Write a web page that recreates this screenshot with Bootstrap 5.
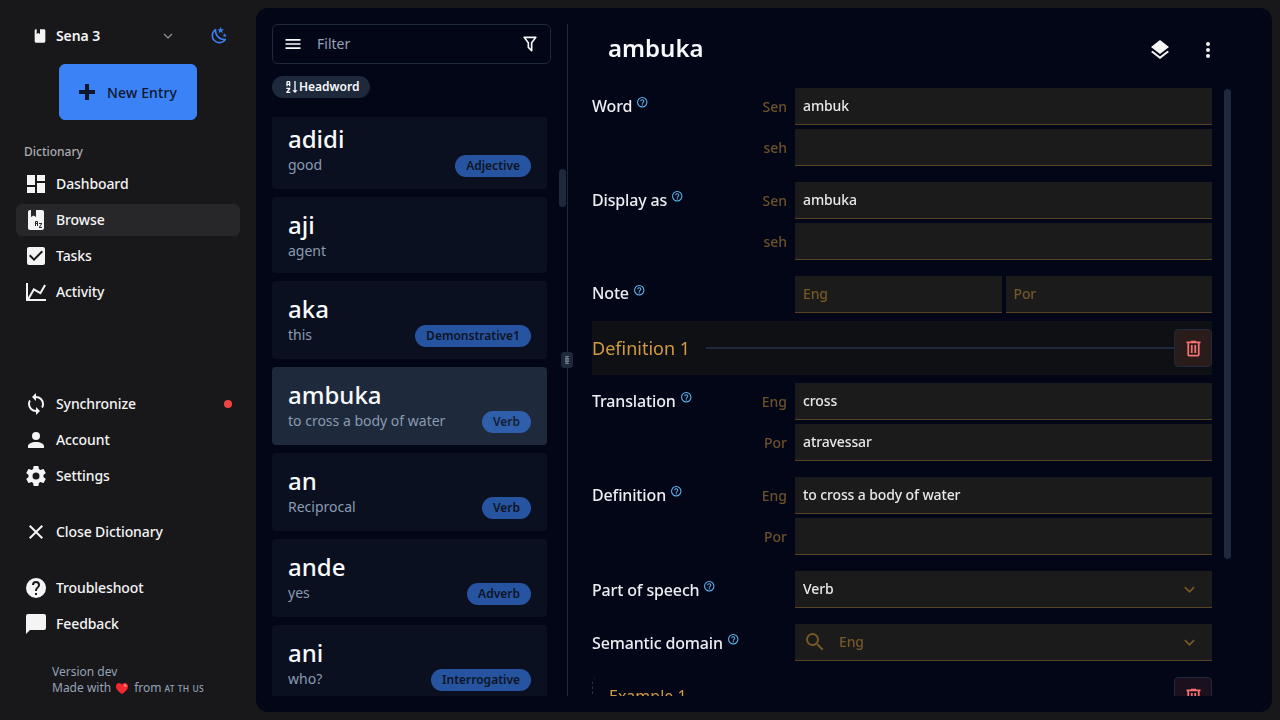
<!DOCTYPE html>
<html lang="en" data-bs-theme="dark">
<head>
<meta charset="utf-8">
<meta name="viewport" content="width=device-width, initial-scale=1">
<title>Sena 3 – Browse</title>
<link href="https://cdn.jsdelivr.net/npm/bootstrap@5.3.0/dist/css/bootstrap.min.css" rel="stylesheet">
<style>
  body { font-family: "Noto Sans", sans-serif; font-size: 14px; line-height: 20px; background: #18181b; color: #f4f4f5; }
  svg { fill: currentColor; flex: none; display: block; }
  .side { width: 256px; padding: 20px 16px 16px; }
  .side-head { height: 32px; padding-left: 16px; }
  .side-head .title { width: 104px; font-weight: 600; letter-spacing: -.1px; }
  .side-head .caret { color: #8b8b90; }
  .moon { color: #3b82f6; margin-left: 34px; margin-top: -1px; }
  .btn-entry { --bs-btn-color: #0f172a; --bs-btn-bg: #3b82f6; --bs-btn-border-color: #3b82f6; width: 138px; height: 56px; border-radius: 6px; font-size: 14px; font-weight: 500; gap: 8px; padding: 0 0 0 15px; margin: 12px 0 16px 43px; }
  .btn-entry span { letter-spacing: .15px; }
  .side-label { height: 32px; padding: 6px 8px; font-size: 12px; color: #acacb0; font-weight: 500; }
  .side .nav-link { height: 32px; padding: 0 8px; gap: 8px; color: #f4f4f5; border-radius: 6px; font-weight: 500; letter-spacing: -.1px; }
  .side .nav-link.active { background: #27272a; }
  .side .nav { gap: 4px; }
  .side .nav .apart { margin-top: 20px; }
  .status-dot { width: 8px; height: 8px; background: #ef4444; border-radius: 50%; }
  .about { font-size: 12px; line-height: 16px; color: #94a3b8; padding: 24px 0 0 36px; }
  .about .made { height: 16px; }
  .about small { font-size: 8.5px; word-spacing: .8px; letter-spacing: .2px; font-weight: 500; margin-left: 3px; margin-top: 1px; }
  .heart { margin: 1px 6px 0 5px; }
  .panel { background: #020617; border-radius: 12px; margin: 8px 8px 8px 0; padding: 16px 0 16px 16px; width: 1016px; }
  .list-pane { width: 295px; }
  .filter { width: 279px; height: 40px; border: 1px solid #1e293b; border-radius: 6px; padding: 0 10px; color: #f8fafc; }
  .filter input { background: none; border: 0; outline: 0; padding: 0 0 2px 14px; color: #f8fafc; min-width: 0; height: 38px; }
  .filter input::placeholder { color: #94a3b8; opacity: 1; }
  .sort-chip { width: 98px; height: 22px; margin: 12px 0 19px; border-radius: 11px; background: #1e293b; color: #f8fafc; font-size: 12px; font-weight: 600; line-height: 16px; padding-left: 11px; }
  .entries { width: 275px; }
  .entry-stack { gap: 8px; margin-top: -6px; }
  .entry { background: #0a101f; border-radius: 4px; padding: 12px 16px; flex: none; }
  .entry.chosen { background: #1e293b; }
  .entry h2 { font-size: 24px; line-height: 32px; font-weight: 500; color: #f8fafc; margin: 0; }
  .entry p { margin: 0; color: #8a9bb2; }
  .pos { height: 22px; border-radius: 11px; padding: 0 11px; line-height: 22px; font-size: 12px; font-weight: 600; background: #3b82f6; color: #0f172a; opacity: .6; }
  .thumb { width: 7px; border-radius: 4px; background: #1e293b; }
  .list-thumb { height: 38px; margin: 52px 1px 0 12px; }
  .form-thumb { height: 470px; margin-top: 1px; }
  .divider { width: 1px; background: #1e293b; }
  .grip { position: absolute; left: -6px; top: 328px; width: 12px; height: 16px; border-radius: 3px; background: #1e293b; color: #b6bdc8; }
  .editor { width: 639px; margin-left: 24px; will-change: transform; }
  .editor-head { height: 64px; padding-left: 16px; padding-right: 11px; }
  .editor-head h1 { font-size: 24px; line-height: 32px; font-weight: 600; margin: 0 0 16px; color: #f8fafc; }
  .tools { gap: 24px; margin-bottom: 13px; }
  .fields { width: 620px; }
  .field-grid { display: grid; grid-template-columns: 155px 40px 8px 417px; row-gap: 4px; margin-bottom: 16px; }
  .langs { grid-column: 2; text-align: right; color: #6d5229; height: 37px; line-height: 38px; font-weight: 500; }
  .field-grid > .ctl, .field-grid > .pair { grid-column: 4; }
  .cap { font-size: 16px; line-height: 36px; height: 37px; font-weight: 500; letter-spacing: -.15px; white-space: nowrap; color: #eceef1; }
  .cap svg { display: inline-block; vertical-align: 4px; color: #60b8f5; margin-left: 0; }
  .cap.low { line-height: 38px; }
  .cap.high { line-height: 35px; }
  .cap.high svg { vertical-align: 3px; }
  .ctl { height: 37px; background: #1b1b1b; border: 0; border-bottom: 1px solid #57431f; border-radius: 0; color: #e8e8e8; padding: 0 8px; font-weight: 500; letter-spacing: -.12px; font-size: 14px; width: 100%; min-width: 0; outline: 0; }
  input.ctl { padding-bottom: 2px; }
  .ctl::placeholder, .ctl.muted { color: #755826; opacity: 1; }
  .ctl svg { color: #755826; }
  .ctl .hint { margin-left: 12px; }
  .sense { height: 54px; background: #0f1013; margin: -8px 0 8px; color: #d29a42; font-size: 18px; }
  .sense hr { height: 2px; background: #1e293b; border: 0; opacity: 1; margin: 0 0 0 16px; }
  .btn-del { --bs-btn-color: #f87171; --bs-btn-bg: #2b1c1c; --bs-btn-border-color: #1e293b; width: 38px; height: 38px; padding: 0; border-radius: 4px; --bs-btn-hover-bg: #3b1c1c; }
  .example { height: 60px; border-left: 1px dashed #263246; border-radius: 6px 0 0 0; padding-left: 16px; color: #d29a42; font-size: 16px; }
  .example .btn-del { --bs-btn-bg: #1b101d; }
  .example span { line-height: 38px; }
</style>
</head>
<body class="vh-100 overflow-hidden">
<svg class="d-none">
  <symbol id="help" viewBox="0 0 24 24"><path d="M11,18H13V16H11V18M12,2A10,10 0 0,0 2,12A10,10 0 0,0 12,22A10,10 0 0,0 22,12A10,10 0 0,0 12,2M12,20C7.59,20 4,16.41 4,12C4,7.59 7.59,4 12,4C16.41,4 20,7.59 20,12C20,16.41 16.41,20 12,20M12,6A4,4 0 0,0 8,10H10A2,2 0 0,1 12,8A2,2 0 0,1 14,10C14,12 11,11.75 11,15H13C13,12.75 16,12.5 16,10A4,4 0 0,0 12,6Z"/></symbol>
  <symbol id="trash" viewBox="0 0 24 24"><path d="M9,3V4H4V6H5V19A2,2 0 0,0 7,21H17A2,2 0 0,0 19,19V6H20V4H15V3H9M7,6H17V19H7V6M9,8V17H11V8H9M13,8V17H15V8H13Z"/></symbol>
  <symbol id="down" viewBox="0 0 24 24"><path d="M7.41,8.58L12,13.17L16.59,8.58L18,10L12,16L6,10L7.41,8.58Z"/></symbol>
</svg>
<div class="d-flex h-100">
  <aside class="side d-flex flex-column">
    <div class="side-head d-flex align-items-center">
      <svg width="16" height="16" viewBox="0 0 24 24"><path d="M18,22A2,2 0 0,0 20,20V4C20,2.89 19.1,2 18,2H12V9L9.5,7.5L7,9V2H6A2,2 0 0,0 4,4V20A2,2 0 0,0 6,22H18Z"/></svg>
      <span class="title ms-2">Sena 3</span>
      <svg class="caret" width="16" height="16" viewBox="0 0 24 24"><path d="M6.500 9.500l5.500 5.500 5.500-5.500" fill="none" stroke="currentColor" stroke-width="2" stroke-linecap="round" stroke-linejoin="round"/></svg>
      <svg class="moon" width="19" height="19" viewBox="0 0 24 24"><path d="M17.75,4.09L15.22,6.03L16.13,9.09L13.5,7.28L10.87,9.09L11.78,6.03L9.25,4.09L12.44,4L13.5,1L14.56,4L17.75,4.09M21.25,11L19.61,12.25L20.2,14.23L18.5,13.06L16.8,14.23L17.39,12.25L15.75,11L17.81,10.95L18.5,9L19.19,10.95L21.25,11M18.97,15.95C19.8,15.87 20.69,17.05 20.16,17.8C19.84,18.25 19.5,18.67 19.08,19.07C15.17,23 8.84,23 4.94,19.07C1.03,15.17 1.03,8.83 4.94,4.93C5.34,4.53 5.76,4.17 6.21,3.85C6.96,3.32 8.14,4.21 8.06,5.04C7.79,7.9 8.75,10.87 10.95,13.06C13.14,15.26 16.1,16.22 18.97,15.95M17.33,17.97C14.5,17.81 11.7,16.64 9.53,14.5C7.36,12.31 6.2,9.5 6.04,6.68C3.23,9.82 3.34,14.64 6.35,17.66C9.37,20.67 14.19,20.78 17.33,17.97Z"/></svg>
    </div>
    <button class="btn btn-entry d-flex align-items-center flex-shrink-0"><svg width="24" height="24" viewBox="0 0 24 24"><path d="M20 14H14V20H10V14H4V10H10V4H14V10H20V14Z"/></svg><span class="pb-px">New Entry</span></button>
    <div class="side-label">Dictionary</div>
    <nav class="nav flex-column">
      <a class="nav-link d-flex align-items-center" href="#"><svg width="24" height="24" viewBox="0 0 24 24"><path d="M13,3V9H21V3M13,21H21V11H13M3,21H11V15H3M3,13H11V3H3V13Z"/></svg>Dashboard</a>
      <a class="nav-link active d-flex align-items-center" href="#"><svg width="24" height="24" viewBox="0 0 24 24"><path d="M5.81,2C4.83,2.09 4,3 4,4V20C4,21.05 4.95,22 6,22H18C19.05,22 20,21.05 20,20V4C20,2.89 19.1,2 18,2H12V9L9.5,7.5L7,9V2H6C5.94,2 5.87,2 5.81,2M12,13H13A1,1 0 0,1 14,14V18H13V16H12V18H11V14A1,1 0 0,1 12,13M12,14V15H13V14H12M15,15H18V16L16,19H18V20H15V19L17,16H15V15Z"/></svg>Browse</a>
      <a class="nav-link d-flex align-items-center" href="#"><svg width="24" height="24" viewBox="0 0 24 24"><path d="M10,17L5,12L6.41,10.58L10,14.17L17.59,6.58L19,8M19,3H5C3.89,3 3,3.89 3,5V19A2,2 0 0,0 5,21H19A2,2 0 0,0 21,19V5C21,3.89 20.1,3 19,3Z"/></svg>Tasks</a>
      <a class="nav-link d-flex align-items-center" href="#"><svg width="24" height="24" viewBox="0 0 24 24"><path d="M16,11.78L20.24,4.45L21.97,5.45L16.74,14.5L10.23,10.75L5.46,19H22V21H2V3H4V17.54L9.5,8L16,11.78Z"/></svg>Activity</a>
    </nav>
    <nav class="nav flex-column mt-auto">
      <a class="nav-link d-flex align-items-center" href="#"><svg width="24" height="24" viewBox="0 0 24 24"><path d="M12,18A6,6 0 0,1 6,12C6,11 6.25,10.03 6.7,9.2L5.24,7.74C4.46,8.97 4,10.43 4,12A8,8 0 0,0 12,20V23L16,19L12,15M12,4V1L8,5L12,9V6A6,6 0 0,1 18,12C18,13 17.75,13.97 17.3,14.8L18.76,16.26C19.54,15.03 20,13.57 20,12A8,8 0 0,0 12,4Z"/></svg>Synchronize<span class="status-dot ms-auto"></span></a>
      <a class="nav-link d-flex align-items-center" href="#"><svg width="24" height="24" viewBox="0 0 24 24"><path d="M12,4A4,4 0 0,1 16,8A4,4 0 0,1 12,12A4,4 0 0,1 8,8A4,4 0 0,1 12,4M12,14C16.42,14 20,15.79 20,18V20H4V18C4,15.79 7.58,14 12,14Z"/></svg>Account</a>
      <a class="nav-link d-flex align-items-center" href="#"><svg width="24" height="24" viewBox="0 0 24 24"><path d="M12,15.5A3.5,3.5 0 0,1 8.5,12A3.5,3.5 0 0,1 12,8.5A3.5,3.5 0 0,1 15.5,12A3.5,3.5 0 0,1 12,15.5M19.43,12.97C19.47,12.65 19.5,12.33 19.5,12C19.5,11.67 19.47,11.34 19.43,11L21.54,9.37C21.73,9.22 21.78,8.95 21.66,8.73L19.66,5.27C19.54,5.05 19.27,4.96 19.05,5.05L16.56,6.05C16.04,5.66 15.5,5.32 14.87,5.07L14.5,2.42C14.46,2.18 14.25,2 14,2H10C9.75,2 9.54,2.18 9.5,2.42L9.13,5.07C8.5,5.32 7.96,5.66 7.44,6.05L4.95,5.05C4.73,4.96 4.46,5.05 4.34,5.27L2.34,8.73C2.21,8.95 2.27,9.22 2.46,9.37L4.57,11C4.53,11.34 4.5,11.67 4.5,12C4.5,12.33 4.53,12.65 4.57,12.97L2.46,14.63C2.27,14.78 2.21,15.05 2.34,15.27L4.34,18.73C4.46,18.95 4.73,19.03 4.95,18.95L7.44,17.94C7.96,18.34 8.5,18.68 9.13,18.93L9.5,21.58C9.54,21.82 9.75,22 10,22H14C14.25,22 14.46,21.82 14.5,21.58L14.87,18.93C15.5,18.67 16.04,18.34 16.56,17.94L19.05,18.95C19.27,19.03 19.54,18.95 19.66,18.73L21.66,15.27C21.78,15.05 21.73,14.78 21.54,14.63L19.43,12.97Z"/></svg>Settings</a>
      <a class="nav-link apart d-flex align-items-center" href="#"><svg width="24" height="24" viewBox="0 0 24 24"><path d="M19,6.41L17.59,5L12,10.59L6.41,5L5,6.41L10.59,12L5,17.59L6.41,19L12,13.41L17.59,19L19,17.59L13.41,12L19,6.41Z"/></svg>Close Dictionary</a>
      <a class="nav-link apart d-flex align-items-center" href="#"><svg width="24" height="24" viewBox="0 0 24 24"><path d="M15.07,11.25L14.17,12.17C13.45,12.89 13,13.5 13,15H11V14.5C11,13.39 11.45,12.39 12.17,11.67L13.41,10.41C13.78,10.05 14,9.55 14,9C14,7.89 13.1,7 12,7A2,2 0 0,0 10,9H8A4,4 0 0,1 12,5A4,4 0 0,1 16,9C16,9.88 15.64,10.67 15.07,11.25M13,19H11V17H13M12,2A10,10 0 0,0 2,12A10,10 0 0,0 12,22A10,10 0 0,0 22,12C22,6.47 17.5,2 12,2Z"/></svg>Troubleshoot</a>
      <a class="nav-link d-flex align-items-center" href="#"><svg width="24" height="24" viewBox="0 0 24 24"><path d="M20,2H4A2,2 0 0,0 2,4V22L6,18H20A2,2 0 0,0 22,16V4C22,2.89 21.1,2 20,2Z"/></svg>Feedback</a>
    </nav>
    <div class="about mb-2">
      <div>Version dev</div>
      <div class="made d-flex align-items-center">Made with
        <svg class="heart" width="12" height="11" viewBox="0 0 12 11"><path fill="#f4282f" d="M6 11C3 8.8 0 6.400 0 3.400C0 1.300 1.400 0 3.100 0C4.400 0 5.500.7 6 1.800C6.500.7 7.600 0 8.900 0C10.600 0 12 1.300 12 3.400C12 6.400 9 8.800 6 11Z"/><ellipse cx="9.200" cy="2.500" rx="1.600" ry="1.200" fill="#ff7b78" transform="rotate(35 9.200 2.500)"/></svg>from<small>AT TH US</small></div>
    </div>
  </aside>

  <main class="panel d-flex">
    <section class="list-pane d-flex flex-column">
      <div class="filter d-flex align-items-center">
        <svg width="20" height="20" viewBox="0 0 24 24"><path d="M3,6H21V8H3V6M3,11H21V13H3V11M3,16H21V18H3V16Z"/></svg>
        <input class="flex-grow-1" placeholder="Filter" aria-label="Filter">
        <svg width="20" height="20" viewBox="0 0 24 24"><path d="M15,19.88C15.04,20.18 14.94,20.5 14.71,20.71C14.32,21.1 13.69,21.1 13.3,20.71L9.29,16.7C9.06,16.47 8.96,16.16 9,15.87V10.75L4.21,4.62C3.87,4.19 3.95,3.56 4.38,3.22C4.57,3.08 4.78,3 5,3V3H19V3C19.22,3 19.43,3.08 19.62,3.22C20.05,3.56 20.13,4.19 19.79,4.62L15,10.75V19.88M7.04,5L11,10.06V15.58L13,17.58V10.05L16.96,5H7.04Z"/></svg>
      </div>
      <div class="sort-chip d-flex align-items-center flex-shrink-0"><svg width="16" height="16" viewBox="0 0 24 24"><path d="M19 17H22L18 21L14 17H17V3H19M11 13V15L7.67 19H11V21H5V19L8.33 15H5V13M9 3H7C5.900 3 5 3.900 5 5V11H7V9H9V11H11V5C11 3.900 10.110 3 9 3M9 7H7V5H9Z"/></svg>Headword</div>
      <div class="d-flex flex-grow-1 overflow-hidden">
        <div class="entries overflow-hidden">
          <div class="entry-stack d-flex flex-column">
            <div class="entry"><h2>adidi</h2><div class="d-flex justify-content-between"><p>good</p><span class="pos">Adjective</span></div></div>
            <div class="entry"><h2>aji</h2><p>agent</p></div>
            <div class="entry"><h2>aka</h2><div class="d-flex justify-content-between"><p>this</p><span class="pos">Demonstrative1</span></div></div>
            <div class="entry chosen"><h2>ambuka</h2><div class="d-flex justify-content-between"><p>to cross a body of water</p><span class="pos">Verb</span></div></div>
            <div class="entry"><h2>an</h2><div class="d-flex justify-content-between"><p>Reciprocal</p><span class="pos">Verb</span></div></div>
            <div class="entry"><h2>ande</h2><div class="d-flex justify-content-between"><p>yes</p><span class="pos">Adverb</span></div></div>
            <div class="entry"><h2>ani</h2><div class="d-flex justify-content-between"><p>who?</p><span class="pos">Interrogative</span></div></div>
          </div>
        </div>
        <div class="thumb list-thumb"></div>
      </div>
    </section>
    <div class="divider position-relative"><div class="grip d-flex align-items-center justify-content-center"><svg width="4" height="8" viewBox="0 0 4 8" shape-rendering="crispEdges"><path d="M0 0h4v1H0zM0 2h4v1H0zM0 5h4v1H0zM0 7h4v1H0z" opacity=".55"/><path d="M1 1h2v1H1zM0 3h4v2H0zM1 6h2v1H1z" opacity=".4"/></svg></div></div>

    <section class="editor d-flex flex-column overflow-hidden">
      <header class="editor-head d-flex align-items-center justify-content-between flex-shrink-0">
        <h1>ambuka</h1>
        <div class="tools d-flex">
          <svg width="24" height="24" viewBox="0 0 24 24"><path d="M12,16L19.36,10.27L21,9L12,2L3,9L4.63,10.27M12,18.54L4.62,12.81L3,14.07L12,21.07L21,14.07L19.37,12.800L12,18.54Z"/></svg>
          <svg width="24" height="24" viewBox="0 0 24 24"><path d="M12,16A2,2 0 0,1 14,18A2,2 0 0,1 12,20A2,2 0 0,1 10,18A2,2 0 0,1 12,16M12,10A2,2 0 0,1 14,12A2,2 0 0,1 12,14A2,2 0 0,1 10,12A2,2 0 0,1 12,10M12,4A2,2 0 0,1 14,6A2,2 0 0,1 12,8A2,2 0 0,1 10,6A2,2 0 0,1 12,4Z"/></svg>
        </div>
      </header>
      <div class="d-flex justify-content-between flex-grow-1 overflow-hidden">
        <div class="fields">
          <div class="field-grid">
            <div class="cap">Word <svg width="12.500" height="12.500"><use href="#help"/></svg></div>
            <span class="langs">Sen</span><input class="ctl" value="ambuk">
            <span class="langs">seh</span><input class="ctl">
          </div>
          <div class="field-grid">
            <div class="cap">Display as <svg width="12.500" height="12.500"><use href="#help"/></svg></div>
            <span class="langs">Sen</span><input class="ctl" value="ambuka">
            <span class="langs">seh</span><input class="ctl">
          </div>
          <div class="field-grid">
            <div class="cap high">Note <svg width="12.500" height="12.500"><use href="#help"/></svg></div>
            <div class="pair d-flex gap-1"><input class="ctl" placeholder="Eng"><input class="ctl" placeholder="Por"></div>
          </div>
          <div class="sense d-flex align-items-center">Definition 1<hr class="flex-grow-1"><button class="btn btn-del d-flex align-items-center justify-content-center" aria-label="Delete"><svg width="21" height="21"><use href="#trash"/></svg></button></div>
          <div class="field-grid">
            <div class="cap">Translation <svg width="12.500" height="12.500"><use href="#help"/></svg></div>
            <span class="langs">Eng</span><input class="ctl" value="cross">
            <span class="langs">Por</span><input class="ctl" value="atravessar">
          </div>
          <div class="field-grid">
            <div class="cap">Definition <svg width="12.500" height="12.500"><use href="#help"/></svg></div>
            <span class="langs">Eng</span><input class="ctl" value="to cross a body of water">
            <span class="langs">Por</span><input class="ctl">
          </div>
          <div class="field-grid">
            <div class="cap low">Part of speech <svg width="12.500" height="12.500"><use href="#help"/></svg></div>
            <div class="ctl d-flex align-items-center justify-content-between">Verb<svg class="me-1" width="21" height="21"><use href="#down"/></svg></div>
          </div>
          <div class="field-grid">
            <div class="cap low">Semantic domain <svg width="12.500" height="12.500"><use href="#help"/></svg></div>
            <div class="ctl muted d-flex align-items-center"><svg width="24" height="24" viewBox="0 0 24 24"><path d="M9.500,3A6.500,6.500 0 0,1 16,9.500C16,11.110 15.410,12.590 14.440,13.730L14.710,14H15.500L20.500,19L19,20.500L14,15.500V14.710L13.730,14.440C12.590,15.410 11.110,16 9.500,16A6.500,6.500 0 0,1 3,9.500A6.500,6.500 0 0,1 9.500,3M9.500,5C7,5 5,7 5,9.500C5,12 7,14 9.500,14C12,14 14,12 14,9.500C14,7 12,5 9.500,5Z"/></svg><span class="hint">Eng</span><svg class="me-1 ms-auto" width="21" height="21"><use href="#down"/></svg></div>
          </div>
          <div class="example d-flex justify-content-between align-items-start"><span>Example 1</span><button class="btn btn-del d-flex align-items-center justify-content-center" aria-label="Delete"><svg width="21" height="21"><use href="#trash"/></svg></button></div>
        </div>
        <div class="thumb form-thumb"></div>
      </div>
    </section>
  </main>
</div>
<script src="https://cdn.jsdelivr.net/npm/bootstrap@5.3.0/dist/js/bootstrap.bundle.min.js"></script>
</body>
</html>
